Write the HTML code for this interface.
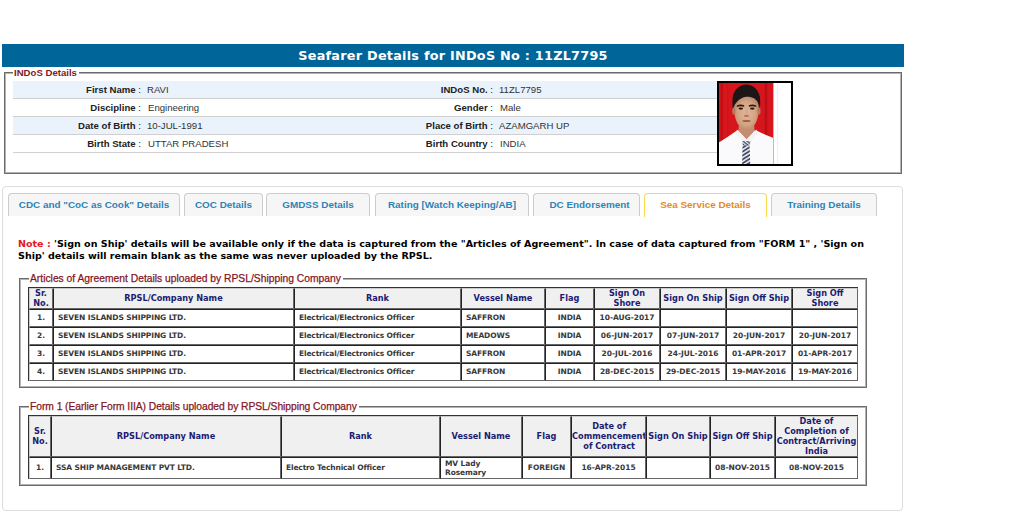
<!DOCTYPE html>
<html><head><meta charset="utf-8"><title>Seafarer Details</title>
<style>
html,body{margin:0;padding:0;background:#fff;}
body{width:1011px;height:527px;position:relative;overflow:hidden;font-family:"Liberation Sans",Arial,sans-serif;font-size:11px;color:#222;}
.abs{position:absolute;}
#title{left:2px;top:44px;width:902px;height:23px;background:#006699;color:#fff;font-family:"DejaVu Sans",Verdana,sans-serif;font-weight:bold;font-size:12.8px;letter-spacing:0.25px;line-height:23px;text-align:center;}
.fs{position:absolute;border:1px solid #6a6a6a;box-shadow:inset 0 0 0 1px #b4b4b4;box-sizing:border-box;}
.lg{position:absolute;background:#fff;color:#85161f;font-size:10.3px;line-height:12px;white-space:nowrap;padding:0 2px 0 1px;}
.lg{-webkit-text-stroke:0.25px #85161f;}
.lg.b{font-weight:bold;font-size:9.6px;-webkit-text-stroke:0;}
.row{position:absolute;left:13px;width:704px;height:17px;border-bottom:1px solid #d0d0d0;}
.row.alt{background:#eaf2fb;}
.lbl{position:absolute;right:0;top:0;font-weight:bold;font-size:9.6px;line-height:17px;white-space:nowrap;color:#222;}
.lbl i{font-style:normal;font-weight:normal;}
.val{position:absolute;top:0;font-size:9.6px;line-height:17px;white-space:nowrap;color:#333;}
#tabs{left:2px;top:186px;width:901px;height:325px;border:1px solid #ddd;border-radius:4px;box-sizing:border-box;}
.tab{position:absolute;top:193px;height:23px;box-sizing:border-box;border:1px solid #ccc;border-bottom:none;border-radius:4px 4px 0 0;background:#f6f6f6;color:#2e83b8;font-weight:bold;font-size:9.9px;line-height:21px;text-align:center;white-space:nowrap;}
.tab.act{border-color:#fbd850;background:#fff;color:#e58a1e;height:24px;}
#note{left:18px;top:238px;width:870px;font-family:"DejaVu Sans",Verdana,sans-serif;font-weight:bold;font-size:9.555px;line-height:12px;color:#000;}
#note b{color:#e8141c;}
table.g{position:absolute;border-collapse:separate;border-spacing:0;border:0 solid #333;border-width:1px 0 0 1px;table-layout:fixed;font-family:"DejaVu Sans",Verdana,sans-serif;font-weight:bold;}
table.g th,table.g td{border:1px solid;border-color:#222 #666 #666 #222;padding:0;box-sizing:border-box;overflow:hidden;}
table.g tr:first-child th{border-top-color:#ccc;}
table.g th:first-child,table.g td:first-child{border-left-color:#ccc;}
table.g th{background:#f0f0f0;color:#1c1c70;font-size:8.2px;line-height:10px;text-align:center;white-space:nowrap;}
table.g td{font-size:7.5px;letter-spacing:-0.04px;line-height:10px;color:#383838;text-align:center;white-space:nowrap;}
table.g td.l{text-align:left;padding-left:4px;letter-spacing:-0.1px;}
table.g td.r{letter-spacing:-0.15px;}
table.g th span,table.g td span{display:inline-block;position:relative;top:-1px;vertical-align:middle;}
table.g th span.two{margin-top:-1px;top:0;}
table.g td span{top:0;}
</style></head><body>
<div id="title" class="abs">Seafarer Details for INDoS No : 11ZL7795</div>

<div class="fs" style="left:4px;top:72px;width:898px;height:102px;"></div>
<div class="lg b" style="left:13px;top:67px;">INDoS Details</div>

<div class="row alt" style="top:81px;"><div class="abs" style="left:0;width:128px;height:17px;"><span class="lbl">First Name<i> :</i></span></div><span class="val" style="left:134px;">RAVI</span><div class="abs" style="left:0;width:480px;height:17px;"><span class="lbl">INDoS No.<i> :</i></span></div><span class="val" style="left:486px;">11ZL7795</span></div>
<div class="row" style="top:99px;"><div class="abs" style="left:0;width:128px;height:17px;"><span class="lbl">Discipline<i> :</i></span></div><span class="val" style="left:135px;">Engineering</span><div class="abs" style="left:0;width:480px;height:17px;"><span class="lbl">Gender<i> :</i></span></div><span class="val" style="left:487px;">Male</span></div>
<div class="row alt" style="top:117px;"><div class="abs" style="left:0;width:128px;height:17px;"><span class="lbl">Date of Birth<i> :</i></span></div><span class="val" style="left:134px;">10-JUL-1991</span><div class="abs" style="left:0;width:480px;height:17px;"><span class="lbl">Place of Birth<i> :</i></span></div><span class="val" style="left:486px;">AZAMGARH UP</span></div>
<div class="row" style="top:135px;"><div class="abs" style="left:0;width:128px;height:17px;"><span class="lbl">Birth State<i> :</i></span></div><span class="val" style="left:135px;">UTTAR PRADESH</span><div class="abs" style="left:0;width:480px;height:17px;"><span class="lbl">Birth Country<i> :</i></span></div><span class="val" style="left:487px;">INDIA</span></div>

<svg class="abs" style="left:717px;top:81px;" width="76" height="100" viewBox="0 0 76 100">
<defs><filter id="bl" x="-10%" y="-10%" width="120%" height="120%"><feGaussianBlur stdDeviation="0.75"/></filter>
<filter id="bl2" x="-20%" y="-20%" width="140%" height="140%"><feGaussianBlur stdDeviation="0.55"/></filter>
<radialGradient id="sk" cx="0.5" cy="0.5" r="0.6"><stop offset="0" stop-color="#e2b799"/><stop offset="0.6" stop-color="#d4a384"/><stop offset="1" stop-color="#b27d5f"/></radialGradient>
<pattern id="st" width="3.3" height="3.3" patternUnits="userSpaceOnUse" patternTransform="rotate(-32)"><rect width="3.3" height="1.7" fill="#474c62"/></pattern><pattern id="st2" width="2.6" height="2.6" patternUnits="userSpaceOnUse" patternTransform="rotate(40)"><rect width="2.6" height="1.3" fill="#474c62"/></pattern>
<clipPath id="cp"><rect x="2" y="2" width="54" height="81"/></clipPath></defs>
<rect x="0" y="0" width="76" height="85" fill="#000"/>
<rect x="2" y="2" width="72" height="81" fill="#fff"/>
<rect x="2" y="2" width="54" height="81" fill="#d7151c"/>
<rect x="56" y="2" width="1" height="81" fill="#bdbdbd"/>
<rect x="60" y="2" width="1" height="81" fill="#efefef"/>
<g clip-path="url(#cp)"><g filter="url(#bl)">
<rect x="3.5" y="0" width="2.5" height="64" fill="#c01018"/>
<rect x="10" y="0" width="1.5" height="60" fill="#cb1219"/>
<rect x="47.5" y="0" width="3" height="60" fill="#bf1018"/>
<path d="M-4 65 Q8 58 20 49.5 L39.5 49.5 Q48 54 60 58.5 L60 96 L-4 96 Z" fill="#fafafd"/>
<path d="M22 40 L37 40 L37.5 50 L29.6 58.5 L21.5 50 Z" fill="#c48d6f"/>
<ellipse cx="29.3" cy="19" rx="13.8" ry="15.6" fill="#1d1619"/>
<path d="M17 27 Q17 16 29.5 15.5 Q42 16 41.8 27 Q42 36 38.5 42.5 Q34 49 29.3 49 Q24.5 49 20.5 42.5 Q17 36 17 27 Z" fill="url(#sk)"/>
<ellipse cx="16.8" cy="30" rx="1.6" ry="3.6" fill="#b27c62"/>
<ellipse cx="42" cy="30" rx="1.6" ry="3.6" fill="#b27c62"/>
<path d="M15.6 27.5 Q14.8 17 18.5 13.5 L41 12.5 Q44.2 18 42.8 27.5 Q42.2 22 40.5 18.8 Q35 15 29.5 15.4 Q23.5 16.6 19.8 21 Q17.2 24 15.6 27.5 Z" fill="#1d1619"/>
<path d="M19.8 24.4 Q23.5 22.6 27.2 24.2 L27.2 25.8 Q23.5 24.6 19.8 26 Z" fill="#2c1b18"/>
<path d="M31.8 24.2 Q35.5 22.6 39.2 24.4 L39.2 26 Q35.5 24.6 31.8 25.8 Z" fill="#2c1b18"/>
<ellipse cx="23.8" cy="27.6" rx="2.3" ry="1.05" fill="#2b1b19"/>
<ellipse cx="35.3" cy="27.6" rx="2.3" ry="1.05" fill="#2b1b19"/>
<path d="M28.6 28 L30.4 28 L31.6 34.6 L27.4 34.6 Z" fill="#d9a98a"/>
<ellipse cx="29.5" cy="34.9" rx="2.6" ry="0.9" fill="#a8705a"/>
<ellipse cx="29.5" cy="40" rx="4.2" ry="1.1" fill="#9c5a4e"/>
<path d="M20 48.5 L29.6 58.5 L39.5 48.5 L40.5 53 L31.5 62.5 L27.5 62.5 L19 53 Z" fill="#f2f2f7"/>
</g>
<g filter="url(#bl2)">
<path d="M25.6 64 L32.6 64 L33.6 96 L24.8 96 Z" fill="#e4e6f0"/>
<path d="M25.6 64 L32.6 64 L33.6 96 L24.8 96 Z" fill="url(#st)"/>
<path d="M25.2 60 L33.8 60 L32.6 64.6 L25.8 64.6 Z" fill="#e4e6f0"/>
<path d="M25.2 60 L33.8 60 L32.6 64.6 L25.8 64.6 Z" fill="url(#st2)"/>
</g></g>
</svg>

<div id="tabs" class="abs"></div>
<div class="tab" style="left:8px;width:172px;">CDC and "CoC as Cook" Details</div>
<div class="tab" style="left:184px;width:79px;">COC Details</div>
<div class="tab" style="left:266px;width:104px;">GMDSS Details</div>
<div class="tab" style="left:375px;width:154px;">Rating [Watch Keeping/AB]</div>
<div class="tab" style="left:533px;width:107px;padding-left:6px;">DC Endorsement</div>
<div class="tab act" style="left:644px;width:123px;">Sea Service Details</div>
<div class="tab" style="left:771px;width:106px;">Training Details</div>

<div id="note" class="abs"><b>Note :</b> 'Sign on Ship' details will be available only if the data is captured from the "Articles of Agreement". In case of data captured from "FORM 1" , 'Sign on Ship' details will remain blank as the same was never uploaded by the RPSL.</div>

<div class="fs" style="left:19px;top:278px;width:848px;height:110px;"></div>
<div class="lg" style="left:29px;top:273px;">Articles of Agreement Details uploaded by RPSL/Shipping Company</div>
<table class="g" style="left:28px;top:287px;width:830px;">
<colgroup><col style="width:24px"><col style="width:241px"><col style="width:167px"><col style="width:84px"><col style="width:49px"><col style="width:66px"><col style="width:66px"><col style="width:66px"><col style="width:66px"></colgroup>
<tr style="height:21px"><th><span class="two">Sr.<br>No.</span></th><th><span>RPSL/Company Name</span></th><th><span>Rank</span></th><th><span>Vessel Name</span></th><th><span>Flag</span></th><th><span class="two">Sign On<br>Shore</span></th><th><span>Sign On Ship</span></th><th><span>Sign Off Ship</span></th><th><span class="two">Sign Off<br>Shore</span></th></tr>
<tr style="height:18px"><td><span>1.</span></td><td class="l"><span>SEVEN ISLANDS SHIPPING LTD.</span></td><td class="l r"><span>Electrical/Electronics Officer</span></td><td class="l"><span>SAFFRON</span></td><td><span>INDIA</span></td><td><span>10-AUG-2017</span></td><td></td><td></td><td></td></tr>
<tr style="height:18px"><td><span>2.</span></td><td class="l"><span>SEVEN ISLANDS SHIPPING LTD.</span></td><td class="l r"><span>Electrical/Electronics Officer</span></td><td class="l"><span>MEADOWS</span></td><td><span>INDIA</span></td><td><span>06-JUN-2017</span></td><td><span>07-JUN-2017</span></td><td><span>20-JUN-2017</span></td><td><span>20-JUN-2017</span></td></tr>
<tr style="height:18px"><td><span>3.</span></td><td class="l"><span>SEVEN ISLANDS SHIPPING LTD.</span></td><td class="l r"><span>Electrical/Electronics Officer</span></td><td class="l"><span>SAFFRON</span></td><td><span>INDIA</span></td><td><span>20-JUL-2016</span></td><td><span>24-JUL-2016</span></td><td><span>01-APR-2017</span></td><td><span>01-APR-2017</span></td></tr>
<tr style="height:18px"><td><span>4.</span></td><td class="l"><span>SEVEN ISLANDS SHIPPING LTD.</span></td><td class="l r"><span>Electrical/Electronics Officer</span></td><td class="l"><span>SAFFRON</span></td><td><span>INDIA</span></td><td><span>28-DEC-2015</span></td><td><span>29-DEC-2015</span></td><td><span>19-MAY-2016</span></td><td><span>19-MAY-2016</span></td></tr>
</table>

<div class="fs" style="left:19px;top:406px;width:848px;height:80px;"></div>
<div class="lg" style="left:29px;top:401px;letter-spacing:-0.05px;">Form 1 (Earlier Form IIIA) Details uploaded by RPSL/Shipping Company</div>
<table class="g" style="left:28px;top:415px;width:830px;">
<colgroup><col style="width:22px"><col style="width:230px"><col style="width:159px"><col style="width:82px"><col style="width:49px"><col style="width:75px"><col style="width:64px"><col style="width:65px"><col style="width:83px"></colgroup>
<tr style="height:41px"><th><span>Sr.<br>No.</span></th><th><span>RPSL/Company Name</span></th><th><span>Rank</span></th><th><span>Vessel Name</span></th><th><span>Flag</span></th><th><span>Date of<br>Commencement<br>of Contract</span></th><th><span>Sign On Ship</span></th><th><span>Sign Off Ship</span></th><th><span class="two">Date of<br>Completion of<br>Contract/Arriving<br>India</span></th></tr>
<tr style="height:22px"><td><span>1.</span></td><td class="l"><span>SSA SHIP MANAGEMENT PVT LTD.</span></td><td class="l r"><span>Electro Technical Officer</span></td><td class="l" style="line-height:9px;"><span class="mv">MV Lady<br>Rosemary</span></td><td><span>FOREIGN</span></td><td><span>16-APR-2015</span></td><td></td><td><span>08-NOV-2015</span></td><td><span>08-NOV-2015</span></td></tr>
</table>
</body></html>
